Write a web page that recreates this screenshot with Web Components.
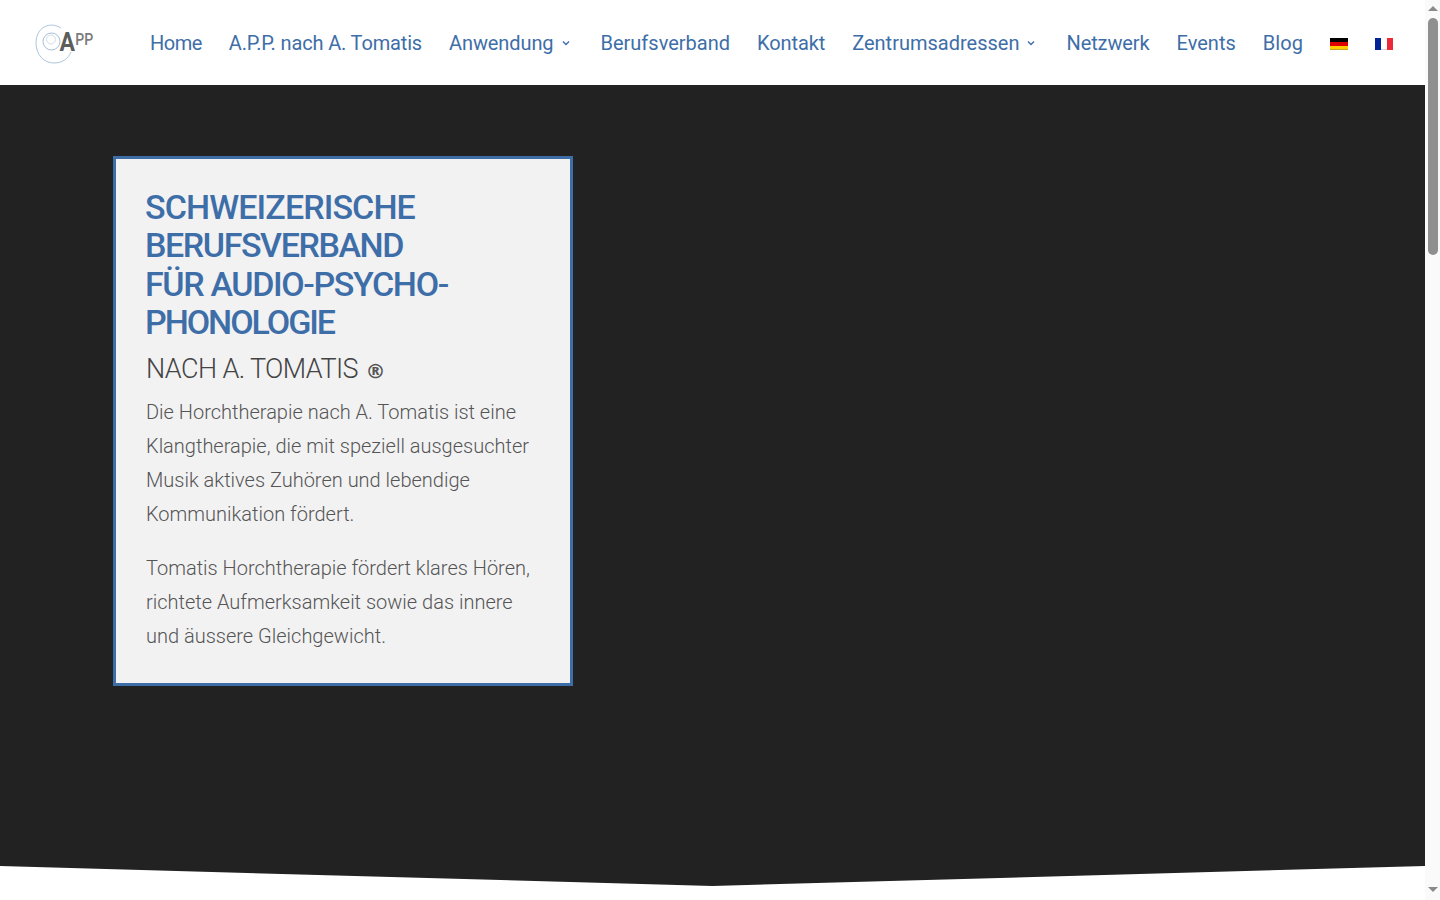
<!DOCTYPE html>
<html lang="de"><head><meta charset="utf-8"><title>APP</title>
<style>html,body{margin:0;height:900px;overflow:hidden;background:#fff;font-family:Roboto,sans-serif}</style></head>
<body>
<app-shell>
<site-header>
<nav-link style="letter-spacing:-.5px">Home</nav-link><nav-link style="letter-spacing:-.15px">A.P.P. nach A. Tomatis</nav-link><nav-link menu>Anwendung</nav-link><nav-link style="letter-spacing:0">Berufsverband</nav-link><nav-link>Kontakt</nav-link><nav-link menu style="letter-spacing:0">Zentrumsadressen</nav-link><nav-link>Netzwerk</nav-link><nav-link style="letter-spacing:0">Events</nav-link><nav-link style="letter-spacing:.1px">Blog</nav-link>
<flag-icon kind="de"></flag-icon><flag-icon kind="fr"></flag-icon>
</site-header>
<hero-section>
<info-card>
<span slot="title"><span style="letter-spacing:-.9px">SCHWEIZERISCHE</span><br><span style="letter-spacing:-1.420px">BERUFSVERBAND</span><br><span style="letter-spacing:-1.360px">FÜR AUDIO-PSYCHO-</span><br><span style="letter-spacing:-2.050px">PHONOLOGIE</span></span>
<span slot="sub"><span style="letter-spacing:-.6px">NACH A. TOMATIS</span> <b style="font:700 20px/1 'DejaVu Sans',sans-serif;color:#555;margin-left:1px">®</b></span>
<p>Die Horchtherapie nach A. Tomatis ist eine Klangtherapie, die mit speziell ausgesuchter Musik aktives Zuhören und lebendige Kommunikation fördert.</p>
<p>Tomatis Horchtherapie fördert klares Hören, richtete Aufmerksamkeit sowie das innere und äussere Gleichgewicht.</p>
</info-card>
</hero-section>
</app-shell>
<script>
const def=(n,html)=>customElements.define(n,class extends HTMLElement{constructor(){super();this.attachShadow({mode:'open'}).innerHTML=typeof html==='function'?html(this):html}});
def('app-shell',`<style>:host{display:flex;height:900px}main{width:1425px;flex:none}
.bar{width:15px;background:#fafafa;position:relative}
.up,.down{width:0;height:0;border-left:5px solid transparent;border-right:5px solid transparent;position:absolute;left:2.5px}
.up{top:6px;border-bottom:5px solid #8a8a8a}.down{top:887px;border-top:5px solid #8a8a8a}
.thumb{position:absolute;left:2.5px;top:18px;width:10px;height:237px;background:#8f8f8f;border-radius:5px}</style>
<main><slot></slot></main><div class="bar"><i class="up"></i><i class="thumb"></i><i class="down"></i></div>`);
def('site-header',`<style>:host{display:flex;align-items:center;height:85px;padding-left:34px;box-sizing:border-box;background:#fff}
.logo{display:block;width:60px;height:42px;flex:none;margin-right:56px;overflow:visible}.nav{display:flex;align-items:center;gap:27px;margin-top:1px}
text{font-family:Roboto,sans-serif}</style><svg class="logo" viewBox="0 0 60 42">
<g fill="none" stroke="#a3bdd8"><path d="M27 6C16-1 2 5 2 21c0 12 8 20 18 20 8 0 14-4 17-11" stroke-width=".9"/><circle cx="17.500" cy="19.500" r="8.500" stroke-width="1"/><circle cx="17" cy="17.500" r="4.500" stroke="#c5d3e2" stroke-width=".8"/></g>
<text x="25.500" y="28.500" font-size="25" font-weight="700" fill="#5c5c5c" textLength="15.500" lengthAdjust="spacingAndGlyphs">A</text>
<text x="41.200" y="22.500" font-size="17" font-weight="500" fill="#7a7a7a" textLength="18" lengthAdjust="spacingAndGlyphs">PP</text></svg>
<div class="nav"><slot></slot></div>`);
def('nav-link',el=>`<style>:host{display:inline-flex;align-items:center;gap:5px;font:400 20px/26px Roboto,sans-serif;color:#3e6ea8;white-space:nowrap;letter-spacing:-.1px}svg{width:14px;height:14px;margin-right:1px}</style><slot></slot>${el.hasAttribute('menu')?'<svg viewBox="0 0 14 14" fill="none" stroke="#3e6ea8" stroke-width="1.400"><path d="M4 5.500l3 3 3-3"/></svg>':''}`);
def('flag-icon',el=>{const de=el.getAttribute('kind')==='de';return `<style>:host{display:block;width:18px;height:12px;margin-top:2px;flex:none}svg{display:block;width:18px;height:12px}</style>`+(de?'<svg viewBox="0 0 18 12"><rect width="18" height="4" fill="#000"/><rect y="4" width="18" height="4" fill="#d00"/><rect y="8" width="18" height="4" fill="#fc0"/><rect y="11" width="18" height="1" fill="#c9a520"/></svg>':'<svg viewBox="0 0 18 12"><rect width="6" height="12" fill="#002395"/><rect x="6" width="6" height="12" fill="#fff"/><rect x="12" width="6" height="12" fill="#ed2939"/><rect x="6" y="11" width="6" height="1" fill="#d5d5dc"/></svg>')});
def('hero-section',`<style>:host{display:block;height:801px;box-sizing:border-box;padding:71px 0 0 113px;background:#222;clip-path:polygon(0 0,100% 0,100% 781px,50% 100%,0 781px)}</style><slot></slot>`);
def('info-card',`<style>:host{display:block;width:460px;height:530px;box-sizing:border-box;background:#f2f2f3;border:3px solid #3e6ea8;padding:30px 30px 0;color:#555;font:300 20px/34px Roboto,sans-serif}
h1{margin:-1px 0 0 -1px;font:500 34px/38.400px Roboto,sans-serif;color:#3e6ea8}h2{margin:8px 0 0;font:300 27px/38px Roboto,sans-serif;color:#444}
::slotted(p){margin:0 0 20px;font:inherit}.b{margin-top:7px}</style><h1><slot name="title"></slot></h1><h2><slot name="sub"></slot></h2><div class="b"><slot></slot></div>`);
</script>
</body></html>
